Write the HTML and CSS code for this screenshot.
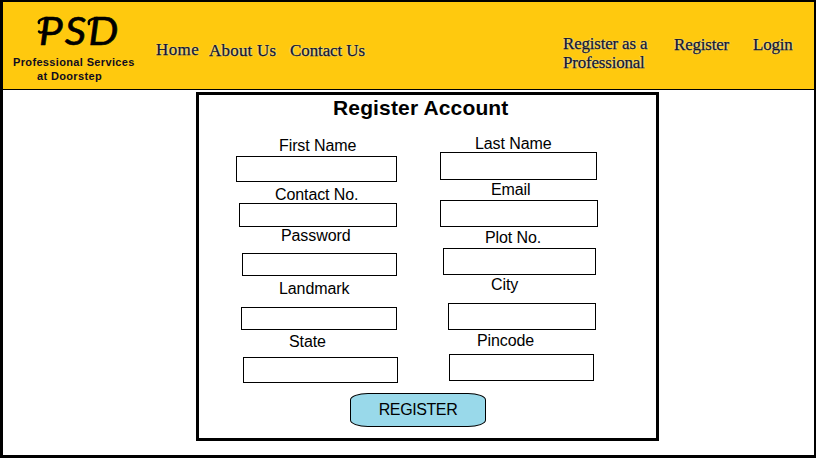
FILE: index.html
```html
<!DOCTYPE html>
<html lang="en">
<head>
<meta charset="utf-8">
<title>PSD - Register Account</title>
<link rel="stylesheet" href="styles.css">
</head>
<body>
<div class="page">
  <header class="header">
    <div class="brand">
      <div class="logo"><span class="wordmark">PSD</span>
        <svg class="swash" width="90" height="36" viewBox="0 0 90 36" aria-hidden="true">
          <path d="M12 5C6 5.500 3 8 4 10M4 18.500C5 20 7 20 9 18"/>
          <path d="M62 5C55 6 53 8 54 11"/>
        </svg>
      </div>
      <div class="tagline">Professional Services</div>
      <div class="tagline second">at Doorstep</div>
    </div>
    <nav class="nav">
      <a class="home">Home</a>
      <a class="about">About Us</a>
      <a class="contact-us">Contact Us</a>
    </nav>
    <nav class="account">
      <a class="pro">Register as a<br>Professional</a>
      <a class="signup">Register</a>
      <a class="login">Login</a>
    </nav>
  </header>
  <form class="panel">
    <h1>Register Account</h1>
    <div class="columns">
      <div class="column left">
        <div class="field first"><label for="first">First Name</label><input id="first"></div>
        <div class="field phone"><label for="phone">Contact No.</label><input id="phone"></div>
        <div class="field password"><label for="password">Password</label><input id="password" type="password"></div>
        <div class="field landmark"><label for="landmark">Landmark</label><input id="landmark"></div>
        <div class="field state"><label for="state">State</label><input id="state"></div>
      </div>
      <div class="column right">
        <div class="field last"><label for="last">Last Name</label><input id="last"></div>
        <div class="field email"><label for="email">Email</label><input id="email"></div>
        <div class="field plot"><label for="plot">Plot No.</label><input id="plot"></div>
        <div class="field city"><label for="city">City</label><input id="city"></div>
        <div class="field pincode"><label for="pincode">Pincode</label><input id="pincode"></div>
      </div>
    </div>
    <button type="button">REGISTER</button>
  </form>
</div>
</body>
</html>
```
FILE: styles.css
```css
* { box-sizing: border-box; }

body {
  margin: 0;
  overflow: hidden;
  background: #fff;
  color: #000;
  font-family: "Liberation Sans", Arial, sans-serif;
}

.page {
  width: 816px;
  height: 458px;
  border: solid #000;
  border-width: 2px 2px 3px 3px;
}

.header {
  display: flex;
  height: 88px;
  background: #ffc90e;
  border-bottom: 1px solid #000;
}

.brand { width: 153px; white-space: nowrap; }

.logo {
  position: relative;
  height: 53px;
  padding: 4px 0 0 36px;
  font: italic 400 39px/48px Lato, sans-serif;
  letter-spacing: 2px;
  -webkit-text-stroke: 0.6px #000;
}

.wordmark {
  display: inline-block;
  transform: scaleX(1.08);
  transform-origin: left;
}

/* pen strokes leading into the P and the D */
.swash {
  position: absolute;
  left: 32px;
  top: 11px;
  fill: none;
  stroke: #000;
  stroke-width: 2.4;
  stroke-linecap: round;
}

.tagline {
  padding-left: 10px;
  font-size: 11px;
  font-weight: bold;
  line-height: 14px;
  letter-spacing: 0.35px;
  color: #100c20;
}

.second { padding-left: 34px; }

.nav, .account {
  display: flex;
  font: 17px/19px "Liberation Serif", serif;
  color: #15152c;
  text-shadow: -1px 0 1px #d8ecff99, 1px 0 1px #d8ecff99;
  -webkit-text-stroke: 0.25px #15152c;
  white-space: nowrap;
}

.nav { width: 407px; padding-top: 38px; }
.home { width: 53px; letter-spacing: 0.4px; }
.about { width: 81px; padding-top: 1px; letter-spacing: 0.2px; }
.contact-us { padding-top: 1px; letter-spacing: -0.1px; }

.account { padding-top: 32px; letter-spacing: -0.2px; }
.pro { width: 111px; }
.signup { width: 79px; padding-top: 1px; }
.login { padding-top: 1px; }

.panel {
  width: 463px;
  height: 349px;
  margin: 2px 0 0 193px;
  border: 3px solid #000;
}

h1 {
  height: 40px;
  margin: 0;
  padding: 1px 0 0 134px;
  font-size: 21px;
  line-height: 24px;
  letter-spacing: 0.15px;
}

.columns { display: flex; height: 258px; }
.column.left { width: 204px; margin-left: 37px; padding-top: 2px; }
.column.right { width: 160px; }

.field { display: flex; flex-direction: column; }
label {
  height: 17px;
  font-size: 16px;
  line-height: 17px;
  letter-spacing: -0.1px;
  white-space: nowrap;
}

input {
  margin: 0;
  padding: 0 4px;
  border: 1px solid #000;
  border-radius: 0;
  background: #fff;
  font: inherit;
}

.first label { padding-left: 43px; }
.first input { width: 161px; height: 26px; margin-top: 2px; }

.phone { margin: 4px 0 0 3px; }
.phone label { padding-left: 36px; }
.phone input { width: 158px; height: 24px; }

.password { margin-left: 6px; }
.password label { padding-left: 39px; }
.password input { width: 155px; height: 23px; margin-top: 9px; }

.landmark { margin: 4px 0 0 5px; }
.landmark label { padding-left: 38px; }
.landmark input { width: 156px; height: 23px; margin-top: 10px; }

.state { margin: 3px 0 0 7px; }
.state label { padding-left: 46px; }
.state input { width: 155px; height: 26px; margin-top: 7px; }

.last label { padding-left: 35px; }
.last input { width: 157px; height: 28px; }

.email { margin-top: 1px; }
.email label { padding-left: 51px; }
.email input { width: 158px; height: 27px; margin-top: 2px; }

.plot { margin: 2px 0 0 3px; }
.plot label { padding-left: 42px; }
.plot input { width: 153px; height: 27px; margin-top: 2px; }

.city { margin: 1px 0 0 8px; }
.city label { padding-left: 43px; }
.city input { width: 148px; height: 27px; margin-top: 10px; }

.pincode { margin: 2px 0 0 9px; }
.pincode label { padding-left: 28px; }
.pincode input { width: 145px; height: 27px; margin-top: 5px; }

button {
  display: block;
  width: 136px;
  height: 34px;
  margin-left: 151px;
  padding: 0;
  border: 1px solid #000;
  border-radius: 18px / 7px;
  background: #99d9ea;
  color: #000;
  font: 16px/32px "Liberation Sans", Arial, sans-serif;
  letter-spacing: -0.4px;
}
```
